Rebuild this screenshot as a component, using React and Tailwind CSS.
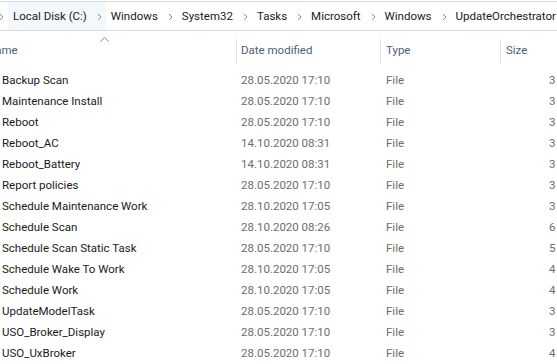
import React from 'react';

const crumbs = ["Local Disk (C:)", "Windows", "System32", "Tasks", "Microsoft", "Windows", "UpdateOrchestrator"];

const rows = [
  ["Backup Scan", "28.05.2020 17:10", "3 KB"],
  ["Maintenance Install", "28.05.2020 17:10", "3 KB"],
  ["Reboot", "28.05.2020 17:10", "3 KB"],
  ["Reboot_AC", "14.10.2020 08:31", "3 KB"],
  ["Reboot_Battery", "14.10.2020 08:31", "3 KB"],
  ["Report policies", "28.05.2020 17:10", "3 KB"],
  ["Schedule Maintenance Work", "28.10.2020 17:05", "3 KB"],
  ["Schedule Scan", "28.10.2020 08:26", "6 KB"],
  ["Schedule Scan Static Task", "28.05.2020 17:10", "5 KB"],
  ["Schedule Wake To Work", "28.10.2020 17:05", "4 KB"],
  ["Schedule Work", "28.10.2020 17:05", "4 KB"],
  ["UpdateModelTask", "28.05.2020 17:10", "3 KB"],
  ["USO_Broker_Display", "28.05.2020 17:10", "3 KB"],
  ["USO_UxBroker", "28.05.2020 17:10", "4 KB"],
];

const Chevron = () => (
  <span className="flex w-[13px] shrink-0 justify-center pt-[2px]">
    <svg width="5" height="8" viewBox="0 0 5 8">
      <path d="M1 1l3 3-3 3" fill="none" stroke="#8a8a8a" strokeWidth="1" />
    </svg>
  </span>
);

const App = () => {
  return (
    <div className="w-[557px] h-[364px] overflow-hidden bg-white text-[11.5px] leading-none" style={{ fontFamily: 'Roboto, "Noto Sans", sans-serif' }}>
      <div className="mt-[1px] h-[30px] border-y border-[#d9d9d9] flex items-stretch whitespace-nowrap text-[#1a1a1a]">
        <div className="-ml-[5px] flex items-center shrink-0"><Chevron /></div>
        {crumbs.map((c, i) => (
          <div key={i} className={"flex items-center shrink-0 " + (i === 0 ? "bg-[#f3f8fd]" : "")}>
            <span className="pl-[5px] pr-[6px] pt-[2px]">{c}</span>
            {i < crumbs.length - 1 && <Chevron />}
          </div>
        ))}
        <div className="ml-auto w-px bg-[#e5e5e5] shrink-0"></div>
      </div>

      <div className="relative h-[39px] pt-[1px] flex items-center text-[#4c607a] whitespace-nowrap">
        <svg className="absolute left-[100px] top-[6px]" width="9" height="5" viewBox="0 0 9 5">
          <path d="M0.5 4.5l4-4 4 4" fill="none" stroke="#8a8a8a" strokeWidth="1" />
        </svg>
        <div className="w-[236px] shrink-0"><span className="-ml-[13px] inline-block">Name</span></div>
        <div className="w-[144px] shrink-0 flex items-center h-[25px] border-l border-[#e5e5e5] pl-[4px]">Date modified</div>
        <div className="w-[120px] shrink-0 flex items-center h-[25px] border-l border-[#e5e5e5] pl-[5px]">Type</div>
        <div className="w-[60px] shrink-0 flex items-center h-[25px] border-l border-[#e5e5e5] pl-[5px]">Size</div>
      </div>

      <div className="flex flex-col">
        {rows.map((r, i) => (
          <div key={i} className="h-[21px] flex items-center whitespace-nowrap">
            <div className="w-[241px] shrink-0 pl-[2px] text-[#1a1a1a]">{r[0]}</div>
            <div className="w-[145px] shrink-0 text-[#6d6d6d]">{r[1]}</div>
            <div className="w-[163px] shrink-0 text-[#6d6d6d]">File</div>
            <div className="shrink-0 text-[#6d6d6d]">{r[2]}</div>
          </div>
        ))}
      </div>
    </div>
  );
};

export default App;
